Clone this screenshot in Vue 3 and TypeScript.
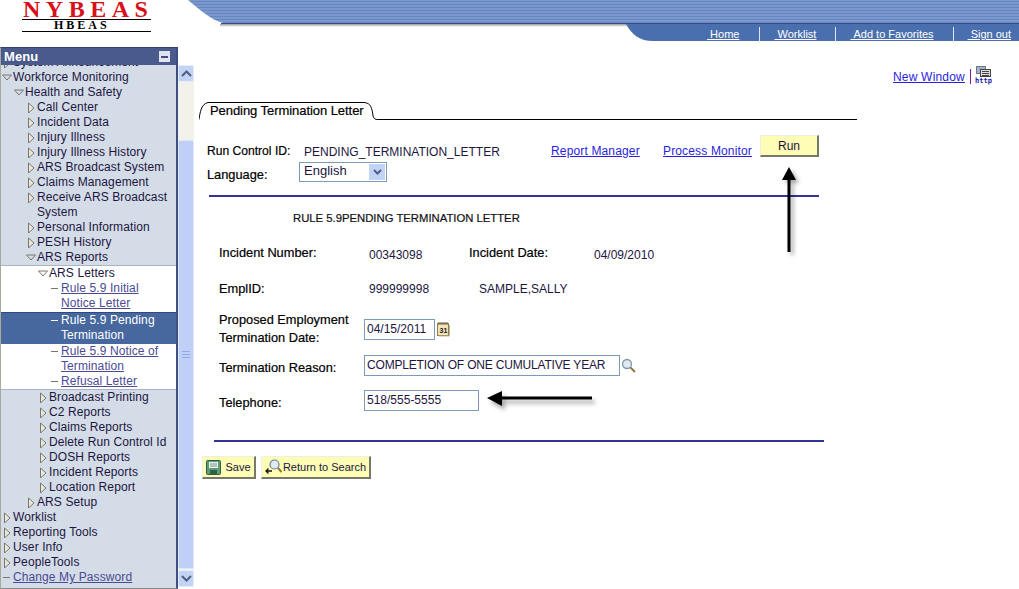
<template>
  <div class="page">
    <header class="top">
      <svg class="banner" width="834" height="41" viewBox="0 0 834 41">
        <defs>
          <pattern id="stripes" width="4" height="3" patternUnits="userSpaceOnUse">
            <rect width="4" height="3" fill="#7c99cf" />
            <rect y="1" width="4" height="1" fill="#6686bf" />
          </pattern>
          <linearGradient id="shade" x1="0" y1="0" x2="0" y2="1">
            <stop offset="0" stop-color="#999" />
            <stop offset="1" stop-color="#fff" />
          </linearGradient>
        </defs>
        <rect x="35" y="24" width="420" height="3" fill="url(#shade)" />
        <path d="M3 0C14 9 26 20 38 23L834 23V0Z" fill="url(#stripes)" />
        <rect x="36" y="23" width="798" height="1" fill="#3f4d8e" />
        <path d="M441 24C447 35 455 41 468 41H834V24Z" fill="#4a6fae" />
      </svg>
      <div class="logo">
        <div class="logo-name">NYBEAS</div>
        <div class="logo-sub">HBEAS</div>
      </div>
      <nav class="top-nav">
        <a v-for="link in topLinks" :key="link" class="top-link">&nbsp;{{ link }}</a>
      </nav>
    </header>

    <div class="content">
      <aside class="menu">
        <div class="menu-head">
          <span>Menu</span>
          <span class="collapse"><i></i></span>
        </div>
        <div class="menu-list">
          <template v-for="group in menuGroups" :key="group.id">
            <div :class="group.id">
              <div
                v-for="item in group.items"
                :key="item.label"
                class="menu-row"
                :class="{ selected: item.selected }"
                :style="{ paddingLeft: indent[item.level] + 'px' }"
              >
                <svg v-if="item.kind === 'open'" class="twist twist-open" width="12" height="11" viewBox="0 0 12 11">
                  <path d="M1.500 3h9L6 8Z" fill="none" stroke="#77776a" />
                </svg>
                <svg v-else-if="item.kind === 'closed'" class="twist" width="11" height="11" viewBox="0 0 11 11">
                  <path d="M2.500 1v10l5.500-5Z" fill="#e8e8dc" stroke="#77776a" />
                </svg>
                <span v-else class="dash" :class="{ 'dash-root': item.level === 0 }"></span>
                <span :class="{ 'menu-link': item.kind === 'leaf' && !item.selected, 'menu-text': item.kind === 'leaf' }">{{ item.label }}</span>
              </div>
            </div>
          </template>
        </div>
      </aside>

      <div class="scroll">
        <div class="scroll-btn">
          <svg width="11" height="7" viewBox="0 0 11 7"><path d="M1 6l4.500-4.500L10 6" fill="none" stroke="#4d6185" stroke-width="2" /></svg>
        </div>
        <div class="scroll-thumb">
          <svg width="8" height="7" viewBox="0 0 8 7"><path d="M0 .5h8M0 3.500h8M0 6.500h8" stroke="#8faaf0" /></svg>
        </div>
        <div class="scroll-btn">
          <svg width="11" height="7" viewBox="0 0 11 7"><path d="M1 1l4.500 4.500L10 1" fill="none" stroke="#4d6185" stroke-width="2" /></svg>
        </div>
      </div>

      <main class="main">
        <div class="toolbar">
          <a class="link new-window">New Window</a>
          <span class="tool-sep"></span>
          <svg class="http-icon" width="17" height="19" viewBox="0 0 17 19">
            <rect x="1.500" y=".5" width="9" height="7" fill="#9fb0d0" stroke="#778" />
            <rect x="5.500" y="3.500" width="10" height="7" fill="#ddd" stroke="#444" />
            <path d="M7 5.500h7M7 7.500h7M7 9.500h7" stroke="#444" />
            <text x="0" y="16.500" class="http-text" textLength="17" lengthAdjust="spacingAndGlyphs">http</text>
          </svg>
        </div>

        <div class="tabs">
          <div class="tab">
            <svg class="tab-shape" width="179" height="18" viewBox="0 0 179 18">
              <path d="M0 17.500C1 11 2 2 9 .5H165C172 1 173 6 174 14C175 17 176 17.500 179 17.500" fill="none" stroke="#000" />
            </svg>
            Pending Termination Letter
          </div>
          <div class="tab-line"></div>
        </div>

        <section class="run-block">
          <div class="run-row">
            <span class="label run-label">Run Control ID:</span>
            <span class="run-id">PENDING_TERMINATION_LETTER</span>
            <a class="link report-link">Report Manager</a>
            <a class="link process-link">Process Monitor</a>
            <button class="btn run-btn" type="button">Run</button>
          </div>
          <div class="lang-row">
            <span class="label lang-label">Language:</span>
            <div class="select">
              <span class="select-text">English</span>
              <span class="select-btn">
                <svg width="9" height="6" viewBox="0 0 9 6"><path d="M1 1l3.500 3.500L8 1" fill="none" stroke="#4d6185" stroke-width="2" /></svg>
              </span>
            </div>
          </div>
        </section>
        <hr class="rule rule-top" />

        <h1 class="title">RULE 5.9PENDING TERMINATION LETTER</h1>

        <div class="info-row info-first">
          <span class="label col-a">Incident Number:</span>
          <span class="value col-b">00343098</span>
          <span class="label col-c">Incident Date:</span>
          <span class="value">04/09/2010</span>
        </div>
        <div class="info-row info-second">
          <span class="label col-a">EmplID:</span>
          <span class="value col-b2">999999998</span>
          <span class="value">SAMPLE,SALLY</span>
        </div>

        <div class="field field-date">
          <span class="label field-label">Proposed Employment<br />Termination Date:</span>
          <div class="input input-date">04/15/2011</div>
          <svg class="cal" width="13" height="15" viewBox="0 0 13 15">
            <rect x=".5" y="1.500" width="11" height="12" fill="#f3e3b5" stroke="#8a7a50" />
            <path d="M12.500 3v11H2" fill="none" stroke="#c6b88f" />
            <path d="M2 0v3M4 0v3M6 0v3M8 0v3M10 0v3" stroke="#665" />
            <text x="2.500" y="11" class="cal-num">31</text>
          </svg>
        </div>
        <div class="field field-reason">
          <span class="label field-label">Termination Reason:</span>
          <div class="input input-reason">COMPLETION OF ONE CUMULATIVE YEAR</div>
          <svg class="lens" width="15" height="15" viewBox="0 0 15 15">
            <circle cx="6" cy="6" r="4.500" fill="#dfeaf2" stroke="#7f97a8" stroke-width="1.300" />
            <path d="M9.500 9.500L14 14" stroke="#8d7a3c" stroke-width="2" />
          </svg>
        </div>
        <div class="field field-phone">
          <span class="label field-label">Telephone:</span>
          <div class="input input-phone">518/555-5555</div>
        </div>

        <hr class="rule rule-bottom" />

        <div class="actions">
          <button class="btn action-save" type="button">
            <svg width="15" height="15" viewBox="0 0 15 15">
              <rect x=".5" y=".5" width="14" height="14" rx="1" fill="#5f9c76" stroke="#2f5f47" />
              <rect x="3" y="2" width="9" height="6" fill="#e6efe9" />
              <path d="M4 4h7M4 6h7" stroke="#7a9a88" />
              <rect x="4" y="10" width="7" height="4.500" fill="#2f5f47" />
            </svg>
            Save
          </button>
          <button class="btn action-return" type="button">
            <svg width="17" height="16" viewBox="0 0 17 16">
              <circle cx="9.500" cy="5.500" r="4.500" fill="#dfeaf2" stroke="#667f98" stroke-width="1.200" />
              <path d="M13 9l3.500 4" stroke="#8d7a3c" stroke-width="2" />
              <path d="M7 12H1.500M3.500 9.500L1 12l2.500 2.500" fill="none" stroke="#111" stroke-width="1.300" />
            </svg>
            Return to Search
          </button>
        </div>

        <!-- annotation arrows drawn over the form -->
        <svg class="arrow arrow-up" width="24" height="96" viewBox="0 0 24 96">
          <path d="M11 14V86" stroke="#000" stroke-width="3" />
          <path d="M11 1L18 14H4Z" fill="#000" />
        </svg>
        <svg class="arrow arrow-left" width="112" height="20" viewBox="0 0 112 20">
          <path d="M12 7H105" stroke="#000" stroke-width="3" />
          <path d="M0 7L15 0V15Z" fill="#000" />
        </svg>
      </main>
    </div>
  </div>
</template>

<script setup lang="ts">
type MenuKind = 'open' | 'closed' | 'leaf';

interface MenuItem {
  label: string;
  level: number;
  kind: MenuKind;
  selected?: boolean;
}

const topLinks = ['Home', 'Worklist', 'Add to Favorites', 'Sign out'];

// left padding per tree level
const indent = [1, 13, 25, 37];

const closed = (label: string, level: number): MenuItem => ({ label, level, kind: 'closed' });
const open = (label: string, level: number): MenuItem => ({ label, level, kind: 'open' });
const leaf = (label: string, level: number, selected = false): MenuItem => ({ label, level, kind: 'leaf', selected });

const menuGroups: { id: string; items: MenuItem[] }[] = [
  {
    id: 'group-plain',
    items: [
      closed('System Announcement', 0),
      open('Workforce Monitoring', 0),
      open('Health and Safety', 1),
      closed('Call Center', 2),
      closed('Incident Data', 2),
      closed('Injury Illness', 2),
      closed('Injury Illness History', 2),
      closed('ARS Broadcast System', 2),
      closed('Claims Management', 2),
      closed('Receive ARS Broadcast System', 2),
      closed('Personal Information', 2),
      closed('PESH History', 2),
      open('ARS Reports', 2)
    ]
  },
  {
    id: 'group-active',
    items: [
      open('ARS Letters', 3),
      leaf('Rule 5.9 Initial Notice Letter', 3),
      leaf('Rule 5.9 Pending Termination', 3, true),
      leaf('Rule 5.9 Notice of Termination', 3),
      leaf('Refusal Letter', 3)
    ]
  },
  {
    id: 'group-rest',
    items: [
      closed('Broadcast Printing', 3),
      closed('C2 Reports', 3),
      closed('Claims Reports', 3),
      closed('Delete Run Control Id', 3),
      closed('DOSH Reports', 3),
      closed('Incident Reports', 3),
      closed('Location Report', 3),
      closed('ARS Setup', 2),
      closed('Worklist', 0),
      closed('Reporting Tools', 0),
      closed('User Info', 0),
      closed('PeopleTools', 0),
      leaf('Change My Password', 0)
    ]
  }
];
</script>

<style>
html,
body {
  margin: 0;
  background: #fff;
}
</style>

<style scoped>
.page {
  width: 1019px;
  height: 589px;
  overflow: hidden;
  font-family: "Liberation Sans", Arial, sans-serif;
  font-size: 12px;
  color: #1c1640;
}
.top {
  position: relative;
  height: 47px;
}
.banner {
  position: absolute;
  left: 185px;
  top: 0;
}
.logo {
  position: absolute;
  left: 22px;
  top: 0;
  width: 129px;
  height: 32px;
  font-family: "Liberation Serif", serif;
  font-weight: 700;
  border-bottom: 1px solid #000;
  box-sizing: border-box;
}
.logo-name {
  height: 23px;
  margin-top: -3px;
  padding-left: 1px;
  box-sizing: border-box;
  color: #d8101a;
  font-size: 24px;
  line-height: 24px;
  letter-spacing: 5.500px;
  border-bottom: 1px solid #000;
}
.logo-sub {
  padding-left: 32px;
  color: #000;
  font-size: 12px;
  line-height: 11px;
  letter-spacing: 3px;
}
.top-nav {
  position: absolute;
  right: 0;
  top: 24px;
  height: 17px;
  display: flex;
  align-items: stretch;
}
.top-link {
  position: relative;
  color: #fff;
  font-size: 11px;
  line-height: 21px;
  text-decoration: underline;
  padding-right: 8px;
}
.top-link:nth-child(1) {
  padding-right: 21px;
}
.top-link:nth-child(2),
.top-link:nth-child(3) {
  margin-left: 14px;
  padding-right: 20px;
}
.top-link:nth-child(4) {
  margin-left: 14px;
}
.top-link + .top-link::before {
  content: "";
  position: absolute;
  left: -15px;
  top: 3px;
  bottom: 0;
  width: 1px;
  background: #dfe6f2;
}
.content {
  display: flex;
  height: 542px;
}
.menu {
  width: 178px;
  flex: none;
  box-sizing: border-box;
  background: #d4dce8;
  border-left: 1px solid #a9a99c;
  border-right: 2px solid #3f4f86;
  border-bottom: 1px solid #888;
  border-top: 1px solid #33416f;
  display: flex;
  flex-direction: column;
  overflow: hidden;
  letter-spacing: 0.1px;
}
.menu-head {
  flex: none;
  height: 17px;
  background: #4a5a8c;
  color: #fff;
  font-size: 13px;
  font-weight: 700;
  line-height: 20px;
  padding: 0 6px 0 3px;
  display: flex;
  justify-content: space-between;
  align-items: center;
}
.collapse {
  width: 11px;
  height: 11px;
  background: #dfe4ee;
  display: flex;
  align-items: center;
  justify-content: center;
}
.collapse i {
  width: 7px;
  height: 2px;
  background: #3f4f86;
}
.menu-list {
  flex: 1;
  overflow: hidden;
}
.group-plain {
  margin-top: -10px;
}
.group-active {
  background: #fff;
  border-top: 1px solid #a9b4c6;
  border-bottom: 1px solid #a9b4c6;
  box-sizing: border-box;
}
.group-active .menu-text {
  max-width: 105px;
}
.menu-row {
  display: flex;
  align-items: flex-start;
  line-height: 15px;
}
.twist {
  flex: none;
  margin-top: 2px;
}
.twist-open {
  margin-left: -1px;
}
.dash {
  flex: none;
  width: 7px;
  height: 1px;
  margin: 7px 3px 0 13px;
  background: #77776a;
}
.dash-root {
  margin-left: 1px;
}
.menu-link {
  color: #4b4b93;
  text-decoration: underline;
}
.menu-row.selected {
  margin-top: 1px;
  background: #46689f;
  color: #fff;
  border-top: 1px solid #2f4a80;
  padding-bottom: 1px;
}
.menu-row.selected .dash {
  background: #fff;
}
.scroll {
  width: 16px;
  flex: none;
  margin-top: 18px;
  margin-bottom: 2px;
  background: #f3f2ea;
  display: flex;
  flex-direction: column;
  justify-content: space-between;
}
.scroll-btn {
  height: 17px;
  background: #c3d3f6;
  border: 1px solid #e6eefc;
  box-sizing: border-box;
  border-radius: 2px;
  display: flex;
  align-items: center;
  justify-content: center;
}
.scroll-thumb {
  margin-top: 58px;
  flex: 1;
  margin-bottom: 1px;
  background: #bfcff6;
  border: 1px solid #dde7fb;
  border-radius: 2px;
  display: flex;
  align-items: center;
  justify-content: center;
}
.main {
  position: relative;
  flex: 1;
  min-width: 0;
}
.toolbar {
  height: 55px;
  box-sizing: border-box;
  padding: 19px 27px 0 0;
  display: flex;
  justify-content: flex-end;
  align-items: flex-start;
}
.link {
  color: #2a1ee0;
  text-decoration: underline;
  letter-spacing: 0.15px;
}
.new-window {
  font-size: 12px;
  line-height: 22px;
  letter-spacing: 0.2px;
}
.tool-sep {
  width: 1px;
  height: 15px;
  margin: 3px 4px 0 5px;
  background: #7a1a9a;
}
.http-text {
  font-family: "DejaVu Sans Mono", monospace;
  font-size: 7.500px;
  font-weight: 700;
  fill: #2222aa;
}
.tabs {
  margin-left: 5px;
  width: 658px;
  height: 18px;
  display: flex;
}
.tab {
  position: relative;
  width: 179px;
  flex: none;
  box-sizing: border-box;
  padding-left: 11px;
  font-size: 13px;
  line-height: 17px;
  letter-spacing: -0.06px;
  color: #000;
  -webkit-text-stroke: 0.2px #000;
}
.tab-shape {
  position: absolute;
  left: 0;
  top: 0;
}
.tab-line {
  flex: 1;
  border-bottom: 1px solid #000;
}
.run-block {
  margin-top: 15px;
  height: 46px;
}
.label {
  font-size: 12.800px;
  color: #000;
  -webkit-text-stroke: 0.2px #000;
}
.run-row {
  display: flex;
  height: 27px;
  padding-left: 13px;
}
.run-label {
  width: 97px;
  padding-top: 9px;
  flex: none;
  font-size: 12.100px;
}
.report-link,
.process-link {
  padding-top: 9px;
}
.run-id {
  width: 247px;
  flex: none;
  padding-top: 10px;
}
.report-link {
  width: 112px;
  flex: none;
}
.process-link {
  width: 97px;
  flex: none;
}
.btn {
  font-family: inherit;
  font-size: 12px;
  color: #1c1640;
  background: #fdfdb6;
  border-style: solid;
  border-color: #f0f0e0 #77776a #77776a #f0f0e0;
  border-width: 1px 2px 2px 1px;
  padding: 0;
  display: flex;
  align-items: center;
  justify-content: center;
}
.run-btn {
  width: 59px;
  height: 22px;
  flex: none;
}
.lang-row {
  display: flex;
  padding-left: 13px;
  height: 19px;
}
.lang-label {
  width: 92px;
  flex: none;
  padding-top: 5px;
}
.select {
  width: 88px;
  height: 20px;
  font-size: 13px;
  box-sizing: border-box;
  border: 1px solid #7c9ab9;
  padding: 1px 1px 1px 4px;
  display: flex;
  justify-content: space-between;
  align-items: center;
}
.select-text {
  padding-bottom: 3px;
}
.select-btn {
  width: 16px;
  height: 16px;
  background: #c3d3f6;
  display: flex;
  align-items: center;
  justify-content: center;
}
.rule {
  border: none;
  height: 2px;
  background: #333399;
  margin: 0;
}
.rule-top {
  margin-left: 15px;
  width: 610px;
  margin-top: 14px;
}
.title {
  margin: 14px 0 0 99px;
  font-size: 11.300px;
  font-weight: 400;
  line-height: 15px;
  color: #111;
  -webkit-text-stroke: 0.2px #111;
}
.info-row {
  display: flex;
  padding-left: 25px;
  line-height: 15px;
}
.info-first {
  margin-top: 19px;
}
.info-first .value {
  padding-top: 3px;
}
.info-second {
  margin-top: 18px;
}
.info-second .value {
  padding-top: 1px;
}
.col-a {
  width: 150px;
  flex: none;
}
.col-b {
  width: 100px;
  flex: none;
}
.col-b2 {
  width: 110px;
  flex: none;
}
.col-c {
  width: 125px;
  flex: none;
}
.field {
  display: flex;
  align-items: flex-start;
  padding-left: 25px;
}
.field-label {
  width: 145px;
  flex: none;
  line-height: 18px;
}
.field-date {
  margin-top: 14px;
  height: 36px;
}
.field-date .input {
  margin-top: 8px;
}
.field-reason {
  margin-top: 8px;
  height: 21px;
}
.field-reason .field-label {
  padding-top: 4px;
}
.field-phone {
  margin-top: 14px;
  height: 21px;
}
.field-phone .field-label {
  padding-top: 4px;
}
.input {
  height: 21px;
  box-sizing: border-box;
  border: 1px solid #7c9ab9;
  padding-left: 2px;
  line-height: 19px;
  flex: none;
}
.input-date {
  width: 71px;
}
.input-reason {
  width: 256px;
  letter-spacing: -0.18px;
}
.input-phone {
  width: 115px;
}
.cal {
  margin: 11px 0 0 2px;
}
.cal-num {
  font-size: 7px;
  font-weight: 700;
  fill: #222;
}
.lens {
  margin: 3px 0 0 1px;
}
.rule-bottom {
  margin-left: 20px;
  width: 610px;
  margin-top: 29px;
}
.actions {
  display: flex;
  gap: 5px;
  margin: 14px 0 0 8px;
}
.actions .btn {
  height: 23px;
  font-size: 11px;
  gap: 4px;
}
.action-save {
  width: 54px;
}
.action-return {
  width: 110px;
}
.actions .action-return {
  gap: 1px;
}
.arrow {
  position: absolute;
  overflow: visible;
}
.arrow-up {
  left: 584px;
  top: 119px;
  filter: drop-shadow(3px 3px 2px rgba(0, 0, 0, 0.35));
}
.arrow-left {
  left: 293px;
  top: 344px;
  filter: drop-shadow(3px 4px 2px rgba(0, 0, 0, 0.35));
}
</style>
